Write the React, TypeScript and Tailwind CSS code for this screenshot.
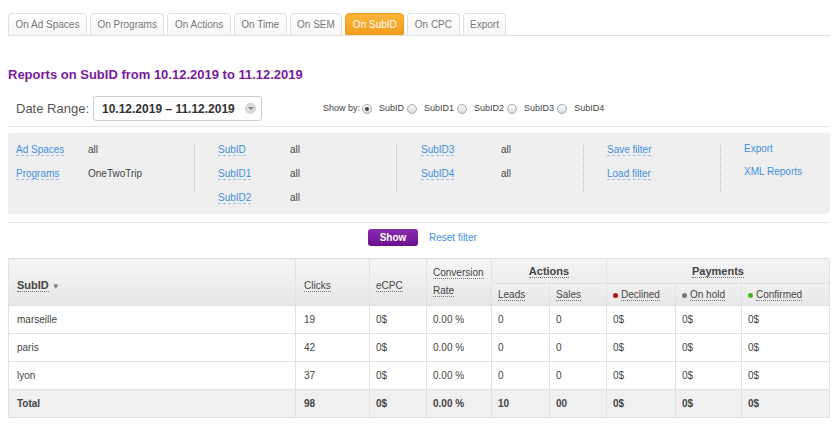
import React from "react";

const tabs = ["On Ad Spaces", "On Programs", "On Actions", "On Time", "On SEM", "On SubID", "On CPC", "Export"];

const rows = [
  { name: "marseille", clicks: "19" },
  { name: "paris", clicks: "42" },
  { name: "lyon", clicks: "37" },
];

function Dashed({ children }: { children: React.ReactNode }) {
  return <span className="border-b border-dashed border-[#9cc3ef] text-[#3d8fe0] leading-[14px]">{children}</span>;
}

function Under({ children }: { children: React.ReactNode }) {
  return <span className="border-b border-dotted border-[#777]">{children}</span>;
}

function Radio({ on }: { on?: boolean }) {
  return (
    <span className="inline-flex w-[10px] h-[10px] rounded-full border border-[#aaa] bg-gradient-to-b from-[#fafafa] to-[#dcdcdc] items-center justify-center">
      {on && <span className="w-[4px] h-[4px] rounded-full bg-[#444]" />}
    </span>
  );
}

export default function App() {
  return (
    <div className="w-[839px] h-[427px] bg-white text-[11px] text-[#444] font-['Liberation_Sans',Arial,sans-serif] px-[8px] pt-[13px] overflow-hidden">
      {/* tabs */}
      <div className="flex gap-[3px] border-b border-[#e2e2e2] w-[822px] h-[23px]">
        {tabs.map((t) => (
          <div
            key={t}
            className={
              t === "On SubID"
                ? "px-[6.5px] h-[22px] leading-[21px] text-[10px] rounded-t-[4px] border border-[#eb9a1c] bg-gradient-to-b from-[#fbb53a] to-[#f19e1a] text-white"
                : "px-[6.5px] h-[22px] leading-[21px] text-[10px] rounded-t-[4px] border border-b-0 border-[#e0e0e0] bg-gradient-to-b from-white to-[#f6f6f6] text-[#777]"
            }
          >
            {t}
          </div>
        ))}
      </div>

      <h1 className="mt-[31px] text-[13px] font-bold text-[#7a1a9c] leading-[16px]">
        Reports on SubID from 10.12.2019 to 11.12.2019
      </h1>

      <div className="flex items-center mt-[13px] h-[25px]">
        <span className="ml-[8px] text-[13px] text-[#555]">Date Range:</span>
        <div className="ml-[4px] w-[169px] h-[25px] border border-[#ccc] rounded-[3px] flex items-center pl-[8px] pr-[5px] justify-between">
          <span className="text-[12px] font-bold text-[#333] whitespace-nowrap">10.12.2019 – 11.12.2019</span>
          <span className="w-[11px] h-[11px] rounded-full bg-[#ddd] border border-[#ccc] flex items-center justify-center">
            <span className="w-0 h-0 border-l-[3px] border-r-[3px] border-t-[3px] border-l-transparent border-r-transparent border-t-[#888]" />
          </span>
        </div>
        <div className="ml-[61px] flex items-center text-[9px] text-[#444] whitespace-nowrap">
          <span className="mr-[2px]">Show by:</span>
          <Radio on />
          <span className="ml-[7px] mr-[3px]">SubID</span>
          <Radio />
          <span className="ml-[7px] mr-[3px]">SubID1</span>
          <Radio />
          <span className="ml-[7px] mr-[3px]">SubID2</span>
          <Radio />
          <span className="ml-[7px] mr-[3px]">SubID3</span>
          <Radio />
          <span className="ml-[7px]">SubID4</span>
        </div>
      </div>

      <div className="mt-[5px] w-[822px] border-t border-[#e4e4e4]" />

      {/* filter panel */}
      <div className="mt-[6px] w-[822px] h-[81px] bg-[#efefef] rounded-[3px] flex pt-[9px] text-[10px]">
        <div className="w-[186px] pl-[8px] flex flex-col gap-[9px]">
          <div className="flex"><span className="w-[72px]"><Dashed>Ad Spaces</Dashed></span><span>all</span></div>
          <div className="flex"><span className="w-[72px]"><Dashed>Programs</Dashed></span><span>OneTwoTrip</span></div>
        </div>
        <div className="h-[47px] border-l border-dotted border-[#bbb] mt-[3px]" />
        <div className="w-[201px] pl-[23px] flex flex-col gap-[9px]">
          <div className="flex"><span className="w-[72px]"><Dashed>SubID</Dashed></span><span>all</span></div>
          <div className="flex"><span className="w-[72px]"><Dashed>SubID1</Dashed></span><span>all</span></div>
          <div className="flex"><span className="w-[72px]"><Dashed>SubID2</Dashed></span><span>all</span></div>
        </div>
        <div className="h-[47px] border-l border-dotted border-[#bbb] mt-[3px]" />
        <div className="w-[186px] pl-[24px] flex flex-col gap-[9px]">
          <div className="flex"><span className="w-[80px]"><Dashed>SubID3</Dashed></span><span>all</span></div>
          <div className="flex"><span className="w-[80px]"><Dashed>SubID4</Dashed></span><span>all</span></div>
        </div>
        <div className="h-[47px] border-l border-dotted border-[#bbb] mt-[3px]" />
        <div className="w-[136px] pl-[23px] flex flex-col gap-[9px]">
          <div><Dashed>Save filter</Dashed></div>
          <div><Dashed>Load filter</Dashed></div>
        </div>
        <div className="h-[47px] border-l border-dotted border-[#bbb] mt-[3px]" />
        <div className="pl-[23px] flex flex-col gap-[9px] text-[#3d8fe0]">
          <div className="leading-[14px]">Export</div>
          <div className="leading-[14px]">XML Reports</div>
        </div>
      </div>

      <div className="mt-[8px] w-[822px] border-t border-[#e4e4e4]" />

      <div className="mt-[6px] flex items-center h-[17px]">
        <button className="ml-[360px] w-[50px] h-[17px] rounded-[3px] bg-gradient-to-b from-[#8a2cb0] to-[#6a0f8e] text-white text-[10px] font-bold">
          Show
        </button>
        <span className="ml-[11px] text-[10px] text-[#3d8fe0]">Reset filter</span>
      </div>

      {/* table */}
      <table className="mt-[12px] w-[822px] border-collapse text-[10px] text-[#444]">
        <thead>
          <tr className="h-[25px] bg-gradient-to-b from-[#f4f4f4] to-[#ececec]">
            <th rowSpan={2} className="w-[287px] text-left pl-[8px] pt-[7px] border border-[#e2e2e2] font-bold text-[11px] bg-gradient-to-b from-[#f6f6f6] via-[#eeeeee] to-[#e6e6e6]">
              <Under>SubID</Under> <span className="text-[#777] text-[8px]">▼</span>
            </th>
            <th rowSpan={2} className="w-[74px] text-left pl-[8px] pt-[7px] border border-[#e2e2e2] font-normal bg-gradient-to-b from-[#f6f6f6] via-[#eeeeee] to-[#e6e6e6]">
              <Under>Clicks</Under>
            </th>
            <th rowSpan={2} className="w-[57px] text-left pl-[6px] pt-[7px] border border-[#e2e2e2] font-normal bg-gradient-to-b from-[#f6f6f6] via-[#eeeeee] to-[#e6e6e6]">
              <Under>eCPC</Under>
            </th>
            <th rowSpan={2} className="w-[65px] text-left pl-[6px] border border-[#e2e2e2] font-normal leading-[18px] bg-gradient-to-b from-[#f6f6f6] via-[#eeeeee] to-[#e6e6e6]">
              <Under>Conversion</Under>
              <br />
              <Under>Rate</Under>
            </th>
            <th colSpan={2} className="border border-[#e2e2e2] font-bold text-[11px]">
              <Under>Actions</Under>
            </th>
            <th colSpan={3} className="border border-[#e2e2e2] font-bold text-[11px]">
              <Under>Payments</Under>
            </th>
          </tr>
          <tr className="h-[22px] bg-gradient-to-b from-[#f0f0f0] to-[#e8e8e8]">
            <th className="w-[58px] text-left pl-[6px] border border-[#e2e2e2] font-normal"><Under>Leads</Under></th>
            <th className="w-[57px] text-left pl-[6px] border border-[#e2e2e2] font-normal"><Under>Sales</Under></th>
            <th className="w-[69px] text-left pl-[6px] border border-[#e2e2e2] font-normal">
              <span className="inline-block w-[5px] h-[5px] rounded-full bg-[#b0141c] mr-[3px] align-middle" />
              <Under>Declined</Under>
            </th>
            <th className="w-[66px] text-left pl-[6px] border border-[#e2e2e2] font-normal">
              <span className="inline-block w-[5px] h-[5px] rounded-full bg-[#777] mr-[3px] align-middle" />
              <Under>On hold</Under>
            </th>
            <th className="text-left pl-[6px] border border-[#e2e2e2] font-normal">
              <span className="inline-block w-[5px] h-[5px] rounded-full bg-[#46b51a] mr-[3px] align-middle" />
              <Under>Confirmed</Under>
            </th>
          </tr>
        </thead>
        <tbody>
          {rows.map((r) => (
            <tr key={r.name} className="h-[28px]">
              <td className="pl-[8px] border border-[#e2e2e2]">{r.name}</td>
              <td className="pl-[8px] border border-[#e2e2e2]">{r.clicks}</td>
              <td className="pl-[6px] border border-[#e2e2e2]">0$</td>
              <td className="pl-[6px] border border-[#e2e2e2]">0.00 %</td>
              <td className="pl-[6px] border border-[#e2e2e2]">0</td>
              <td className="pl-[6px] border border-[#e2e2e2]">0</td>
              <td className="pl-[6px] border border-[#e2e2e2]">0$</td>
              <td className="pl-[6px] border border-[#e2e2e2]">0$</td>
              <td className="pl-[6px] border border-[#e2e2e2]">0$</td>
            </tr>
          ))}
          <tr className="h-[28px] bg-[#f0f0f0] font-bold">
            <td className="pl-[8px] border border-[#e2e2e2]">Total</td>
            <td className="pl-[8px] border border-[#e2e2e2]">98</td>
            <td className="pl-[6px] border border-[#e2e2e2]">0$</td>
            <td className="pl-[6px] border border-[#e2e2e2]">0.00 %</td>
            <td className="pl-[6px] border border-[#e2e2e2]">10</td>
            <td className="pl-[6px] border border-[#e2e2e2]">00</td>
            <td className="pl-[6px] border border-[#e2e2e2]">0$</td>
            <td className="pl-[6px] border border-[#e2e2e2]">0$</td>
            <td className="pl-[6px] border border-[#e2e2e2]">0$</td>
          </tr>
        </tbody>
      </table>
    </div>
  );
}
